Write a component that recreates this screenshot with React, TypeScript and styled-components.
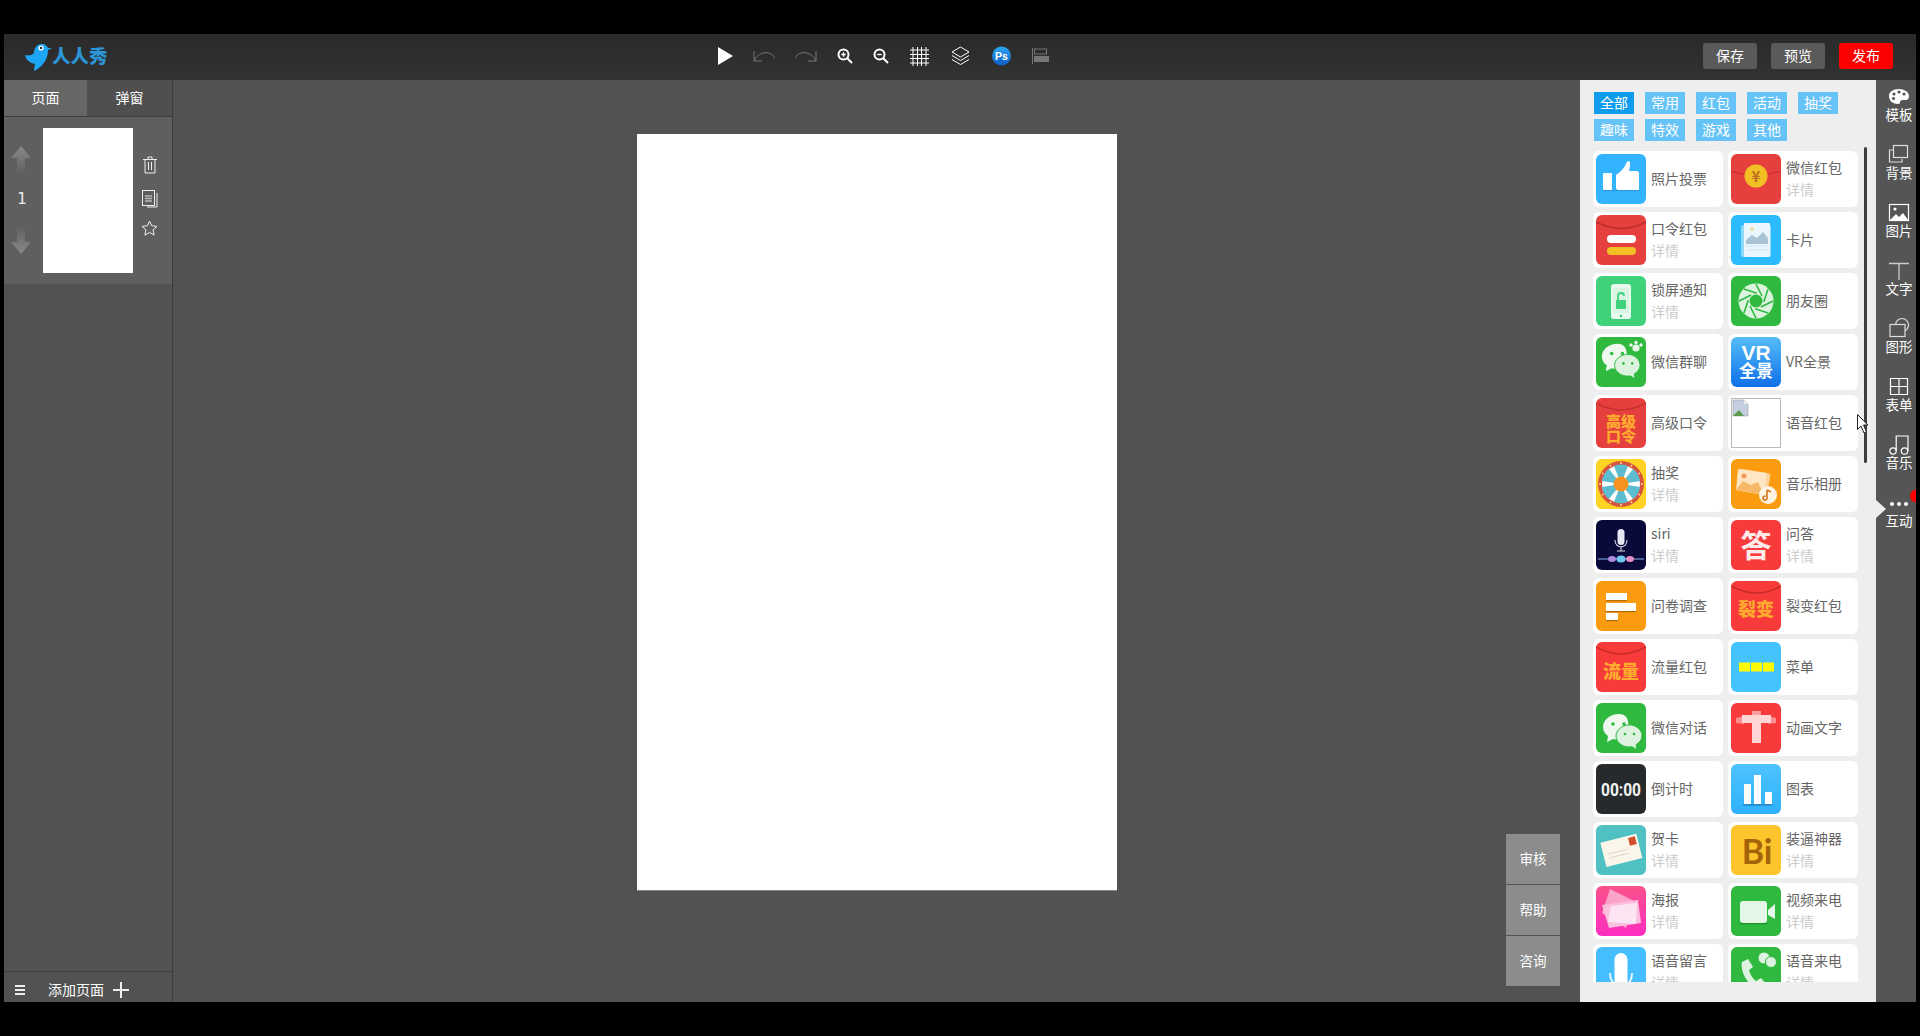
import React from "react";
import styled, { createGlobalStyle } from "styled-components";

const Global = createGlobalStyle`
  html, body { margin: 0; padding: 0; background: #000; }
  body { font-family: "Noto Sans CJK SC", "Liberation Sans", sans-serif; }
  * { box-sizing: border-box; }
`;

const Screen = styled.div`
  width: 1920px; height: 1036px; background: #000; padding: 34px 4px;
  display: flex; flex-direction: column; overflow: hidden; position: relative;
`;
const TopBar = styled.header`
  height: 46px; flex: none; background: linear-gradient(#2a2a2a, #323232);
  display: flex; align-items: center;
`;
const LogoBox = styled.div`
  width: 714px; flex: none; padding: 0 0 1px 20px; display: flex; align-items: center;
`;
const LogoText = styled.span`
  font-size: 18.5px; font-weight: 900; color: #2b95d8; line-height: 1; margin-bottom: 2px;
`;
const Tools = styled.nav`
  flex: 1; display: flex; align-items: center; padding-bottom: 2px;
`;
const Tool = styled.span<{ $w: number; $mr: number }>`
  display: flex; align-items: center; justify-content: center; width: ${p => p.$w}px; margin-right: ${p => p.$mr}px;
`;
const Actions = styled.div`
  display: flex; gap: 14px; padding-right: 23px; padding-bottom: 2px;
`;
const ActionBtn = styled.button<{ $red?: boolean }>`
  width: 54px; height: 26px; border: 0; border-radius: 3px; padding: 0 0 2px; font: inherit; font-size: 14px; line-height: 22px;
  color: #fff; background: ${p => (p.$red ? "#fd0000" : "#5a5a5a")};
`;
const Body = styled.main`
  flex: 1; min-height: 0; display: flex; background: #525252;
`;
const LeftPanel = styled.aside`
  width: 169px; flex: none; border-right: 1px solid #3e3e3e; display: flex; flex-direction: column;
`;
const Tabs = styled.div`
  height: 37px; flex: none; display: flex; border-bottom: 1px solid #3e3e3e;
`;
const Tab = styled.div<{ $on?: boolean }>`
  flex: ${p => (p.$on ? "0 0 83px" : "1")}; display: flex; align-items: center; justify-content: center; padding-bottom: 2px;
  color: #fff; font-size: 14px; background: ${p => (p.$on ? "#666" : "#4f4f4f")};
`;
const PageRow = styled.div`
  height: 167px; flex: none; background: #5f5f5f; display: flex; padding-top: 11px;
`;
const PageOrder = styled.div`
  width: 39px; flex: none; display: flex; flex-direction: column; align-items: center; color: #eee; padding: 18px 5px 0 0;
`;
const PageNum = styled.div`
  height: 52px; display: flex; align-items: center; padding: 0 0 2px 2px; font-size: 15px; font-family: "DejaVu Sans", sans-serif;
`;
const Thumb = styled.div`
  width: 90px; height: 145px; background: #fff; flex: none;
`;
const PageActions = styled.div`
  flex: 1; display: flex; flex-direction: column; align-items: center; padding: 28px 6px 0 0;
  svg { display: block; }
  svg:nth-child(2) { margin-top: 16px; }
  svg:nth-child(3) { margin-top: 12px; }
`;
const Spacer = styled.div`flex: 1;`;
const Footer = styled.div`
  height: 31px; flex: none; border-top: 1px solid #3e3e3e; display: flex; align-items: center; padding: 5px 0 0 11px; color: #fff; font-size: 14px;
`;
const FooterLabel = styled.span`margin: 0 9px 2px 23px;`;
const Workspace = styled.section`
  flex: 1; position: relative; display: flex; justify-content: center; padding-top: 54px;
`;
const Canvas = styled.div`
  width: 480px; height: 756px; background: #fff; box-shadow: 0 1px 0 #888;
`;
const FloatGroup = styled.div`
  position: absolute; right: 20px; bottom: 16px; width: 54px; display: flex; flex-direction: column; gap: 1px;
`;
const FloatBtn = styled.div`
  height: 50px; background: #8c8c8c; color: #fff; font-size: 13.5px; padding-bottom: 2px; display: flex; align-items: center; justify-content: center;
`;
const Library = styled.section`
  width: 296px; flex: none; background: #eee; padding: 12px 0 0 13px; position: relative; display: flex; flex-direction: column;
`;
const TagGrid = styled.div`
  display: flex; flex-wrap: wrap; column-gap: 11px; row-gap: 5px; padding-left: 1px; width: 270px; flex: none;
`;
const Tag = styled.span<{ $on?: boolean }>`
  width: 40px; height: 22px; color: #fff; font-size: 14px; line-height: 20px; text-align: center;
  background: ${p => (p.$on ? "#0f9cec" : "#66c3f8")};
`;
const CardClip = styled.div`
  margin-top: 10px; height: 831px; overflow: hidden; flex: none;
`;
const CardGrid = styled.div`
  display: grid; grid-template-columns: 130px 130px; column-gap: 5px; row-gap: 5px; grid-auto-rows: 56px;
`;
const Card = styled.div`
  background: #fff; border-radius: 6px; padding: 3px; display: flex; align-items: center; gap: 5px;
`;
const Tile = styled.div`
  width: 50px; height: 50px; flex: none; display: block;
  svg { display: block; }
`;
const CardText = styled.div`
  display: flex; flex-direction: column; font-size: 14px; line-height: 22px; color: #666; white-space: nowrap; padding-bottom: 2px;
`;
const Detail = styled.span`color: #ccc;`;
const ScrollThumb = styled.div`
  position: absolute; left: 284px; top: 67px; width: 3px; height: 316px; border-radius: 2px; background: #3d3d3d;
`;
const Rail = styled.aside`
  width: 40px; flex: none; background: #555; display: flex; flex-direction: column; position: relative; padding: 4px 0 0 0;
`;
const RailItem = styled.div`
  height: 58px; width: 46px; display: flex; flex-direction: column; align-items: center; color: #fff; font-size: 13.5px; line-height: 16px;
  svg { display: block; height: 24px; margin-bottom: -2px; }
`;
const RailMarker = styled.div`
  position: absolute; left: 0; top: 420px; width: 0; height: 0; border-left: 10px solid #eee; border-top: 9px solid transparent; border-bottom: 9px solid transparent;
`;
const RedDot = styled.div`
  position: absolute; right: -4px; top: 410px; width: 10px; height: 12px; border-radius: 50%; background: #f00; clip-path: inset(0 4px 0 0);
`;
const Cursor = styled.svg`
  position: absolute; left: 1857px; top: 414px;
`;

const Flap = ({ c = "#c82f2e" }: { c?: string }) => <path d="M0 5 Q25 19 50 5" fill="none" stroke={c} strokeWidth="1.5" />;

const R: React.FC<{ bg: string; children?: React.ReactNode; id?: string; grad?: [string, string] }> = ({ bg, children, grad, id }) => (
  <svg width="50" height="50" viewBox="0 0 50 50">
    {grad && <defs><linearGradient id={id} x1="0" y1="0" x2="0" y2="1"><stop offset="0" stopColor={grad[0]} /><stop offset="1" stopColor={grad[1]} /></linearGradient></defs>}
    <rect width="50" height="50" rx="6" fill={grad ? `url(#${id})` : bg} />
    {children}
  </svg>
);
const cjk = '"Noto Sans CJK SC", sans-serif';
const Bubbles = () => (
  <>
    <path d="M23 11c-9 0-16 6-16 13 0 4 2 7 5 9l-1 6 6-3 3 .5c6-1 8-5 12-8C34 16 30 11 23 11z" fill="#eef8ef" />
    <circle cx="17" cy="21" r="1.8" fill="#2fba3f" /><circle cx="28" cy="21" r="1.8" fill="#2fba3f" />
    <path d="M33 22c-7 0-13 5-13 11s6 11 13 11l3-.2 5 3-1-5c3-2 6-5 6-9 0-6-6-11-13-11z" fill="#dcf1de" stroke="#2fba3f" strokeWidth="1" />
    <circle cx="29" cy="31" r="1.3" fill="#2fba3f" /><circle cx="38" cy="31" r="1.3" fill="#2fba3f" />
  </>
);

const icons: Record<string, React.ReactNode> = {
  thumb: <R bg="" id="g1" grad={["#32b3fd", "#33b5fe"]}><rect x="7" y="19" width="9" height="17" rx="1" fill="#fff" /><path d="M20 21c3-2 7-6 9-9 1-3 2-5 4-5 2 1 1 6 0 10h8c1 0 2 1 2 2v16c0 1-1 2-2 2H25c-2 0-5-2-5-3z" fill="#fff" /><rect x="7" y="36" width="36" height="1.2" fill="#2a9be0" /></R>,
  wxred: <R bg="#e5403d"><path d="M0 17 Q25 25 50 17" fill="none" stroke="#c82f2e" strokeWidth="1.2" /><circle cx="25" cy="22" r="11.5" fill="#f2c025" /><text x="25" y="27.5" fontSize="15" fontWeight="700" fill="#bf6f24" textAnchor="middle" fontFamily={cjk}>¥</text></R>,
  kouling: <R bg="#e5403d"><path d="M0 7 Q25 20 50 7" fill="none" stroke="#bd2c2c" strokeWidth="1.5" /><rect x="11" y="20" width="29" height="8" rx="4" fill="#fff" /><rect x="11" y="32" width="29" height="8" rx="4" fill="#f2c025" /></R>,
  card: <R bg="#2dbbff"><rect x="10" y="10" width="30" height="32" rx="2" fill="#8fd9fb" /><rect x="13" y="8" width="26" height="34" rx="1" fill="#eaf6fd" /><path d="M15 25l6-5 5 3 6-6 5 6v6H15z" fill="#a8c3d5" /><circle cx="21" cy="14" r="2" fill="#f2e2a0" /><path d="M15 31h22M15 35h22" stroke="#cfe3ef" strokeWidth="1" /></R>,
  lock: <R bg="#3fd27b"><rect x="15" y="8" width="20" height="35" rx="3" fill="#e8f9ee" /><rect x="17" y="12" width="16" height="25" fill="#d8f5e2" /><rect x="20" y="24" width="10" height="9" rx="1" fill="#3fd27b" /><path d="M22 24v-4a3 3 0 0 1 6 0" fill="none" stroke="#3fd27b" strokeWidth="1.8" /><circle cx="25" cy="40" r="1.3" fill="#3fd27b" /></R>,
  moments: <R bg="#2fba3f"><circle cx="25" cy="25" r="17.5" fill="#dcf4dd" /><circle cx="25" cy="25" r="6.5" fill="#2fba3f" />{[0, 45, 90, 135, 180, 225, 270, 315].map(a => <path key={a} d="M25 8 L31 20" stroke="#2fba3f" strokeWidth="1.6" transform={`rotate(${a} 25 25)`} />)}</R>,
  group: <R bg="#2fba3f"><g transform="translate(-1 -4) scale(.98)"><Bubbles /></g><circle cx="40" cy="11" r="3.6" fill="#e8f6e8" /><circle cx="35" cy="8" r="1.7" fill="#e8f6e8" /><circle cx="40" cy="5.5" r="1.7" fill="#e8f6e8" /><circle cx="45" cy="8" r="1.7" fill="#e8f6e8" /></R>,
  vr: <R bg="" id="g2" grad={["#55bdf8", "#0f6fe8"]}><text x="25" y="23" fontSize="21" fontWeight="700" fill="#fff" textAnchor="middle" fontFamily='"Liberation Sans", sans-serif'>VR</text><text x="25" y="40" fontSize="17" fontWeight="700" fill="#fff" textAnchor="middle" fontFamily={cjk}>全景</text></R>,
  gaoji: <R bg="#e5403d"><Flap /><text x="25" y="29" fontSize="15" fontWeight="900" fill="#ffab2e" textAnchor="middle" fontFamily={cjk}>高级</text><text x="25" y="44" fontSize="15" fontWeight="900" fill="#ffab2e" textAnchor="middle" fontFamily={cjk}>口令</text></R>,
  broken: <svg width="50" height="50" viewBox="0 0 50 50"><rect x=".5" y=".5" width="49" height="49" fill="#fff" stroke="#bbb" /><path d="M2 2h11l4 4v12H2z" fill="#c3cfe0" stroke="#a0a0a0" strokeWidth=".6" /><path d="M2 18l6-6 5 6z" fill="#5a9a4a" /><path d="M13 2v4h4" fill="#eee" /></svg>,
  wheel: <R bg="#ffd324"><circle cx="25" cy="25" r="23" fill="#d8533c" /><circle cx="25" cy="25" r="19" fill="#fff" />{[0, 60, 120, 180, 240, 300].map(a => <path key={a} d="M25 25 L18 7 A19 19 0 0 1 32 7 Z" fill="#5cbcd0" transform={`rotate(${a} 25 25)`} />)}{[0, 30, 60, 90, 120, 150, 180, 210, 240, 270, 300, 330].map(a => <circle key={a} cx="25" cy="4" r=".9" fill="#ffe8b0" transform={`rotate(${a} 25 25)`} />)}<circle cx="25" cy="25" r="7.5" fill="#f7931e" /></R>,
  album: <R bg="#fb9b10"><rect x="8" y="12" width="30" height="22" rx="2" fill="#fcd29c" transform="rotate(10 23 23)" /><path d="M7 10 L36 14 L33 36 L5 31 Z" fill="#fee6c5" /><path d="M5 31l7-9 8 4 7-3 6 13z" fill="#f7b868" /><circle cx="13" cy="17" r="2.5" fill="#f29a5a" /><circle cx="37" cy="36" r="9" fill="#fff4e3" /><path d="M36 31v8a2 2 0 1 1-1.5-1.8M36 31l4 2" stroke="#d6761c" strokeWidth="1.6" fill="none" /></R>,
  siri: <R bg="#09093a"><rect x="21.5" y="9" width="7" height="16" rx="3.5" fill="#e8e8f2" /><path d="M19 20c0 9 12 9 12 0M25 27v4M21 31h8" stroke="#d8d8e8" strokeWidth="1.1" fill="none" /><path d="M2 39h46" stroke="#8ab4ef" strokeWidth="1" /><ellipse cx="16" cy="39" rx="4" ry="3" fill="#b08ae0" /><ellipse cx="34" cy="39" rx="4" ry="3" fill="#e48fc4" /><ellipse cx="25" cy="39" rx="4.500" ry="3.500" fill="#6fc7f0" /></R>,
  answer: <R bg="#f73b3b"><text x="25" y="37" fontSize="31" fontWeight="700" fill="#ffeaea" textAnchor="middle" fontFamily={cjk}>答</text></R>,
  survey: <R bg="#fb9b10"><rect x="10" y="12" width="21" height="7" fill="#fff" /><rect x="10" y="19" width="21" height="1.200" fill="#b06a08" /><rect x="10" y="22" width="30" height="8" fill="#fff" /><rect x="10" y="30" width="30" height="1.200" fill="#b06a08" /><rect x="10" y="32" width="12" height="7" fill="#fff" /><rect x="10" y="39" width="12" height="1.200" fill="#b06a08" /></R>,
  split: <R bg="#f73b3b"><Flap c="#c52a2a" /><text x="25" y="35" fontSize="18" fontWeight="900" fill="#ffab2e" textAnchor="middle" fontFamily={cjk}>裂变</text></R>,
  flow: <R bg="#f73b3b"><Flap c="#c52a2a" /><text x="25" y="36" fontSize="18" fontWeight="900" fill="#ffab2e" textAnchor="middle" fontFamily={cjk}>流量</text></R>,
  menu: <R bg="#45c3ff"><rect x="8" y="20.5" width="11" height="9" fill="#fffb05" /><rect x="20" y="20.5" width="11" height="9" fill="#fffb05" /><rect x="32" y="20.5" width="11" height="9" fill="#fffb05" /></R>,
  chat: <R bg="#2fba3f"><Bubbles /></R>,
  anim: <R bg="#f73b3b"><path d="M5 15l8-2v8l-8-1zM45 15l-8-2v8l8-1z" fill="#fa8d8f" /><path d="M11 12h29v8H11z" fill="#ffd5d6" /><path d="M21 8h9v4h-9z" fill="#fb9d9f" /><path d="M21 20h9v20h-9z" fill="#ffd5d6" /></R>,
  timer: <R bg="#272a2c"><text x="5" y="32" fontSize="18" fontWeight="700" fill="#f2f2f2" textLength="40" lengthAdjust="spacingAndGlyphs" fontFamily='"Roboto", "Liberation Sans", sans-serif'>00:00</text></R>,
  chart: <R bg="" id="g3" grad={["#4fc3ff", "#2eb1fd"]}><rect x="13" y="20" width="7" height="20" fill="#fff" /><rect x="23" y="11" width="7" height="29" fill="#fff" /><rect x="34" y="28" width="7" height="12" fill="#fff" /><rect x="12" y="40" width="29" height="2" fill="#2b8fd2" /></R>,
  greet: <R bg="#4fc1c2"><g transform="rotate(-14 25 26)"><rect x="7" y="13" width="37" height="25" fill="#fbf6ea" /><rect x="35" y="15" width="7" height="8" fill="#d1502c" /><path d="M12 26h20M12 30h20" stroke="#d8d2c2" strokeWidth=".8" /></g></R>,
  bi: <R bg="#fdc42c"><text x="26" y="39" fontSize="34" fontWeight="700" fill="#a5640a" textAnchor="middle" fontFamily='"Lato", "Liberation Sans", sans-serif'>Bi</text></R>,
  poster: <R bg="" id="g4" grad={["#f9528b", "#fd2ec0"]}><path d="M14 3 L38 15 L30 42 L6 27Z" fill="#fba4c9" /><path d="M6 19 L42 14 L45 37 L13 42Z" fill="#fcc0de" /><path d="M15 20 L41 17 L40 38 L12 36Z" fill="#fde4f2" /></R>,
  video: <R bg="#2fba3f"><rect x="9" y="15" width="27" height="22" rx="3" fill="#e4f6e6" /><path d="M37 24 L44 18 V33 L37 29Z" fill="#e4f6e6" /><rect x="9" y="37" width="27" height="1.3" fill="#1e8f2b" /></R>,
  mic: <R bg="#44beff"><rect x="18.500" y="6" width="13" height="34" rx="6.500" fill="#fff" /><path d="M14 26c0 18 22 18 22 0" fill="none" stroke="#e8f6ff" strokeWidth="2" /><path d="M25 40v10" stroke="#fff" strokeWidth="2" /></R>,
  phone: <R bg="#2fba3f"><path d="M17 12L11 15c-2 8 3 20 16 29l9-6-6-7-5 3c-4-3-6-7-7-11l4-3z" fill="#ddf3df" /><circle cx="33" cy="11" r="6" fill="#ddf3df" stroke="#2fba3f" /><circle cx="40" cy="15" r="5.500" fill="#ddf3df" stroke="#2fba3f" /></R>,
};

type Item = [string, string, boolean];
const items: Item[] = [
  ["thumb", "照片投票", false], ["wxred", "微信红包", true],
  ["kouling", "口令红包", true], ["card", "卡片", false],
  ["lock", "锁屏通知", true], ["moments", "朋友圈", false],
  ["group", "微信群聊", false], ["vr", "VR全景", false],
  ["gaoji", "高级口令", false], ["broken", "语音红包", false],
  ["wheel", "抽奖", true], ["album", "音乐相册", false],
  ["siri", "siri", true], ["answer", "问答", true],
  ["survey", "问卷调查", false], ["split", "裂变红包", false],
  ["flow", "流量红包", false], ["menu", "菜单", false],
  ["chat", "微信对话", false], ["anim", "动画文字", false],
  ["timer", "倒计时", false], ["chart", "图表", false],
  ["greet", "贺卡", true], ["bi", "装逼神器", true],
  ["poster", "海报", true], ["video", "视频来电", true],
  ["mic", "语音留言", true], ["phone", "语音来电", true],
];
const tags = ["全部", "常用", "红包", "活动", "抽奖", "趣味", "特效", "游戏", "其他"];

const s = { fill: "none", stroke: "#fff", strokeWidth: 1.2 };
const rail: [string, React.ReactNode][] = [
  ["模板", <svg width="24" height="24" viewBox="0 0 24 24"><path d="M12 5c-6 0-10 3-10 7 0 5 4 8 9 8 2 0 2-1 2-2s1-2 3-2h3c2 0 3-2 3-4 0-4-5-7-10-7z" fill="#fff" /><circle cx="7" cy="10" r="1.6" fill="#555" /><circle cx="12" cy="8" r="1.6" fill="#555" /><circle cx="17" cy="10" r="1.6" fill="#555" /><circle cx="6.500" cy="14.500" r="1.6" fill="#555" /></svg>],
  ["背景", <svg width="24" height="24" viewBox="0 0 24 24"><rect x="6.500" y="3.500" width="14" height="12" {...s} stroke="#ddd" /><path d="M6 8H2.500v12H15v-3" {...s} stroke="#ddd" /></svg>],
  ["图片", <svg width="24" height="24" viewBox="0 0 24 24"><rect x="2.500" y="4.500" width="19" height="16" {...s} /><circle cx="8" cy="9" r="1.6" fill="#fff" /><path d="M3 20l6-6 3 3 4-4 5 7z" fill="#fff" /></svg>],
  ["文字", <svg width="24" height="24" viewBox="0 0 24 24"><path d="M2 5.500h20M12 5.500V22" stroke="#ccc" strokeWidth="1.3" fill="none" /></svg>],
  ["图形", <svg width="24" height="24" viewBox="0 0 24 24"><circle cx="15" cy="9" r="6.500" {...s} stroke="#ddd" /><rect x="3" y="8.500" width="15" height="12" fill="#555" stroke="#ddd" strokeWidth="1.2" /></svg>],
  ["表单", <svg width="24" height="24" viewBox="0 0 24 24"><path d="M3.500 4.500h17v16h-17zM3.500 12.500h17M12 4.500v16" {...s} /></svg>],
  ["音乐", <svg width="24" height="24" viewBox="0 0 24 24"><circle cx="6" cy="19" r="3.200" {...s} /><circle cx="17.500" cy="19" r="3.200" {...s} /><path d="M9.200 19V4H21v15" {...s} /></svg>],
  ["互动", <svg width="24" height="24" viewBox="0 0 24 24"><circle cx="5" cy="14" r="2" fill="#fff" /><circle cx="12" cy="14" r="2" fill="#fff" /><circle cx="19" cy="14" r="2" fill="#fff" /></svg>],
];

const App: React.FC = () => (
  <Screen>
    <Global />
    <TopBar>
      <LogoBox>
        <svg width="28" height="30" viewBox="0 0 28 30"><path d="M1 13c4 1 7 0 9-2 0-5 3-9 8-9 3 0 5 2 6 4h4l-4 2c0 8-4 15-12 20-1 1-2 1-2 0l1-6C6 21 2 18 1 13z" fill="#1ea6f6" /><circle cx="17" cy="6" r="2.600" fill="#fff" /><circle cx="17" cy="6" r="1.200" fill="#234" /></svg>
        <LogoText>人人秀</LogoText>
      </LogoBox>
      <Tools>
        <Tool $w={15} $mr={20}><svg width="15" height="18" viewBox="0 0 15 18"><path d="M0 0l15 9-15 9z" fill="#fff" /></svg></Tool>
        <Tool $w={22} $mr={20}><svg width="22" height="14" viewBox="0 0 22 14"><path d="M1 2v10h8M1 12C5 3 17 0 22 9" fill="none" stroke="#777" strokeWidth="1" /></svg></Tool>
        <Tool $w={22} $mr={20}><svg width="22" height="14" viewBox="0 0 22 14"><path d="M21 2v10h-8M21 12C17 3 5 0 0 9" fill="none" stroke="#777" strokeWidth="1" /></svg></Tool>
        <Tool $w={16} $mr={20}><svg width="16" height="16" viewBox="0 0 16 16"><circle cx="6.500" cy="6.500" r="5" fill="none" stroke="#fff" strokeWidth="2" /><path d="M10 10l5 5" stroke="#fff" strokeWidth="2" /><path d="M4.300 6.500h4.400M6.500 4.300v4.400" stroke="#fff" strokeWidth="1.400" /></svg></Tool>
        <Tool $w={16} $mr={21}><svg width="16" height="16" viewBox="0 0 16 16"><circle cx="6.500" cy="6.500" r="5" fill="none" stroke="#fff" strokeWidth="2" /><path d="M10 10l5 5" stroke="#fff" strokeWidth="2" /><path d="M4.300 6.500h4.400" stroke="#fff" strokeWidth="1.400" /></svg></Tool>
        <Tool $w={19} $mr={22}><svg width="19" height="19" viewBox="0 0 19 19"><path d="M3 0v19M7.500 0v19M11.500 0v19M16 0v19M0 3h19M0 7.500h19M0 11.500h19M0 16h19" stroke="#fff" strokeWidth="1" /></svg></Tool>
        <Tool $w={19} $mr={22}><svg width="19" height="20" viewBox="0 0 19 20"><path d="M9.500 1L18 6l-8.500 5L1 6zM1 9.500l8.500 5 8.500-5M1 13.500l8.500 5 8.500-5" fill="none" stroke="#fff" strokeWidth="1" /></svg></Tool>
        <Tool $w={19} $mr={21}><svg width="20" height="20" viewBox="0 0 20 20"><defs><linearGradient id="ps" x1="0" y1="0" x2="0" y2="1"><stop offset="0" stopColor="#2aa7f2" /><stop offset="1" stopColor="#0b5dc4" /></linearGradient></defs><circle cx="10" cy="10" r="10" fill="url(#ps)" /><text x="10" y="14" fontSize="11" fontWeight="700" fill="#fff" textAnchor="middle" fontFamily='"Liberation Sans", sans-serif'>Ps</text></svg></Tool>
        <Tool $w={17} $mr={0}><svg width="17" height="16" viewBox="0 0 17 16"><path d="M.5 0v16" stroke="#777" /><rect x="2.500" y="1" width="12" height="5" fill="none" stroke="#777" /><rect x="2" y="8" width="15" height="6" fill="#777" /></svg></Tool>
      </Tools>
      <Actions>
        <ActionBtn>保存</ActionBtn>
        <ActionBtn>预览</ActionBtn>
        <ActionBtn $red>发布</ActionBtn>
      </Actions>
    </TopBar>
    <Body>
      <LeftPanel>
        <Tabs><Tab $on>页面</Tab><Tab>弹窗</Tab></Tabs>
        <PageRow>
          <PageOrder>
            <svg width="22" height="28" viewBox="0 0 22 28"><defs><linearGradient id="up" x1="0" y1="0" x2="0" y2="1"><stop offset="0" stopColor="#8a8a8a" /><stop offset="1" stopColor="#8a8a8a" stopOpacity="0" /></linearGradient><linearGradient id="dn" x1="0" y1="1" x2="0" y2="0"><stop offset="0" stopColor="#8a8a8a" /><stop offset="1" stopColor="#8a8a8a" stopOpacity="0" /></linearGradient></defs><path d="M11 0l10 12h-6v16H7V12H1z" fill="url(#up)" /></svg>
            <PageNum>1</PageNum>
            <svg width="22" height="28" viewBox="0 0 22 28"><path d="M7 0h8v16h6L11 28 1 16h6z" fill="url(#dn)" /></svg>
          </PageOrder>
          <Thumb />
          <PageActions>
            <svg width="14" height="18" viewBox="0 0 14 18"><path d="M0 3.500h14M5 3.500V1h4v2.500M2 3.500h10V17H2zM5.500 6v8M8.500 6v8" fill="none" stroke="#eee" strokeWidth="1" /></svg>
            <svg width="16" height="18" viewBox="0 0 16 18"><rect x=".5" y=".5" width="12" height="15" fill="none" stroke="#eee" /><path d="M3 6h7M3 8.500h7M3 11h7" stroke="#bbb" strokeWidth="1.400" /><path d="M15 3v14H5" fill="none" stroke="#eee" /></svg>
            <svg width="17" height="16" viewBox="0 0 17 16"><path d="M8.500 1l2.200 4.800 5.300.6-4 3.500 1.200 5.200-4.700-2.700-4.700 2.700 1.200-5.200-4-3.500 5.300-.6z" fill="none" stroke="#eee" /></svg>
          </PageActions>
        </PageRow>
        <Spacer />
        <Footer>
          <svg width="10" height="10" viewBox="0 0 10 10"><path d="M0 1h10M0 5h10M0 9h10" stroke="#eee" strokeWidth="1.800" /></svg>
          <FooterLabel>添加页面</FooterLabel>
          <svg width="16" height="16" viewBox="0 0 16 16"><path d="M0 8h16M8 0v16" stroke="#eee" strokeWidth="2" /></svg>
        </Footer>
      </LeftPanel>
      <Workspace>
        <Canvas />
        <FloatGroup>
          <FloatBtn>审核</FloatBtn>
          <FloatBtn>帮助</FloatBtn>
          <FloatBtn>咨询</FloatBtn>
        </FloatGroup>
      </Workspace>
      <Library>
        <TagGrid>{tags.map((t, i) => <Tag key={t} $on={i === 0}>{t}</Tag>)}</TagGrid>
        <CardClip>
          <CardGrid>
            {items.map(([icon, name, more]) => (
              <Card key={name}>
                <Tile>{icons[icon]}</Tile>
                <CardText>{name}{more && <Detail>详情</Detail>}</CardText>
              </Card>
            ))}
          </CardGrid>
        </CardClip>
        <ScrollThumb />
      </Library>
      <Rail>
        {rail.map(([label, icon]) => <RailItem key={label}>{icon}{label}</RailItem>)}
        <RailMarker />
        <RedDot />
      </Rail>
    </Body>
    <Cursor width="12" height="20" viewBox="0 0 12 20"><path d="M.5.5v15l3.500-3.500 3 7 2.500-1-3-7H11z" fill="#fff" stroke="#222" strokeWidth="1" /></Cursor>
  </Screen>
);

export default App;
